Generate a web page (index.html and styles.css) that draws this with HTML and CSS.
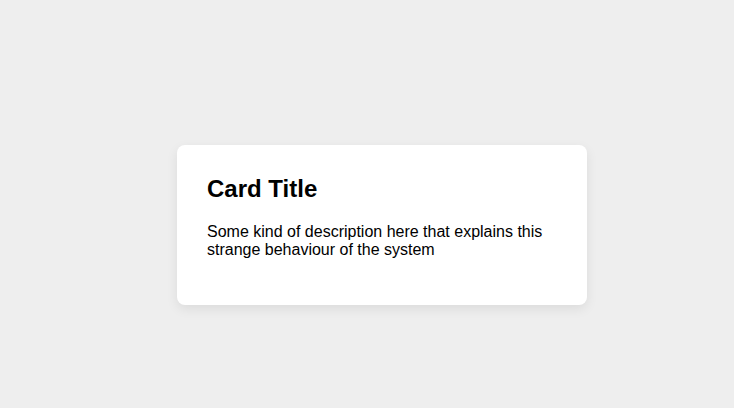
FILE: index.html
```html
<!DOCTYPE html>
<html>
<head>
<meta charset="utf-8">
<link rel="stylesheet" href="styles.css">
</head>
<body>
<main class="stage">
  <section class="card">
    <h2 class="card-title">Card Title</h2>
    <p class="card-text">Some kind of description here that explains this strange behaviour of the system</p>
  </section>
</main>
</body>
</html>
```
FILE: styles.css
```css
html, body {
  margin: 0;
  height: 100%;
  background: #eeeeee;
  font-family: "Liberation Sans", Arial, sans-serif;
  color: #000;
}
.stage {
  padding: 145px 0 0 177px;
}
.card {
  box-sizing: border-box;
  width: 410px;
  height: 160px;
  padding: 30px;
  background: #ffffff;
  border-radius: 8px;
  box-shadow: 0 4px 12px rgba(0, 0, 0, 0.08);
}
.card-title {
  margin: 0 0 20px;
  font-size: 24px;
  font-weight: bold;
}
.card-text {
  margin: 16px 0;
  font-size: 16px;
}
```
